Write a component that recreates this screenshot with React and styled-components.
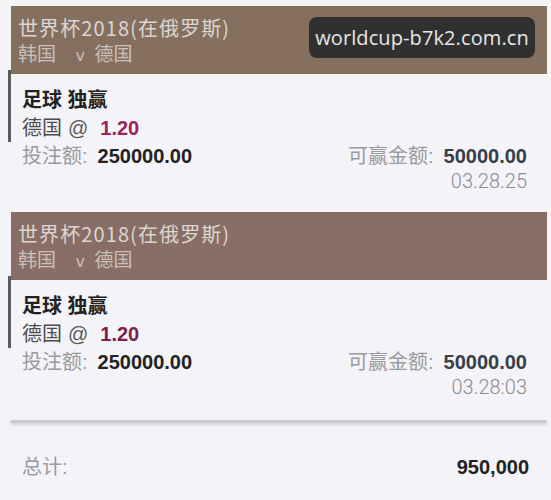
import React from "react";
import styled, { createGlobalStyle } from "styled-components";

const GlobalStyle = createGlobalStyle`
  html, body {
    margin: 0;
    padding: 0;
    background: #f4f3f8;
  }
  body {
    font-family: "Liberation Sans", "Noto Sans CJK SC", sans-serif;
  }
`;

const Page = styled.div`
  position: relative;
  width: 551px;
  min-height: 500px;
  box-sizing: border-box;
  padding: 6px 4px 0 8px;
  background: #f4f3f8;
  overflow: hidden;
`;

const Card = styled.section`
  display: flex;
  flex-direction: column;
  & + & {
    margin-top: 12px;
  }
`;

const Header = styled.header`
  margin-left: 3px;
  height: 68px;
  box-sizing: border-box;
  padding: 9px 7px;
  background: ${(p) => p.$tone};
  color: #ddd5d1;
  font-family: "Noto Sans CJK SC", "Liberation Sans", sans-serif;
  font-size: 20px;
  line-height: 25px;
  display: flex;
  flex-direction: column;
`;

const Title = styled.div`
  height: 25px;
  letter-spacing: 1.1px;
`;

const Match = styled.div`
  height: 25px;
  color: #cbc0bb;
  font-size: 19px;
`;

const Vs = styled.span`
  font-family: "Liberation Sans", sans-serif;
  font-size: 17px;
  margin: 0 10px 0 20px;
`;

const Selection = styled.div`
  margin-top: -4px;
  padding: 16px 0 0 11px;
  border-left: 3px solid #5d5a5c;
  display: flex;
  flex-direction: column;
`;

const Line = styled.div`
  height: 28px;
  line-height: 28px;
  font-size: 20px;
  color: #2a2a2a;
  white-space: pre;
`;

const Market = styled(Line)`
  font-weight: bold;
  color: #222;
`;

const Pick = styled(Line)`
  color: #4c4c4c;
`;

const At = styled.span`
  margin: 0 12px 0 6px;
  color: #5a5a5a;
`;

const Odds = styled.span`
  font-weight: bold;
  color: ${(p) => p.$color};
`;

const Amounts = styled.div`
  display: flex;
  justify-content: space-between;
  align-items: center;
  height: 28px;
  padding: 0 20px 0 14px;
  font-size: 20px;
  line-height: 28px;
`;

const Field = styled.div`
  display: flex;
  align-items: baseline;
`;

const Label = styled.span`
  color: #9b9a9e;
  margin-right: 10px;
`;

const Value = styled.span`
  font-weight: bold;
  color: ${(p) => p.$color || "#222"};
`;

const Time = styled.div`
  height: 22px;
  line-height: 22px;
  padding: 0 20px 8px 0;
  text-align: right;
  font-family: "Roboto", "Liberation Sans", sans-serif;
  font-weight: 300;
  font-size: 20px;
  color: #8d8c92;
`;

const Divider = styled.hr`
  margin: 14px 0 0 2px;
  height: 3px;
  border: none;
  border-radius: 2px;
  background: #c9c9ce;
  box-shadow: 0 2px 3px rgba(150, 150, 160, 0.35);
`;

const Total = styled(Amounts)`
  margin-top: 30px;
  padding-right: 18px;
`;

const Stamp = styled.div`
  position: absolute;
  top: 17px;
  right: 16px;
  width: 226px;
  height: 41px;
  box-sizing: border-box;
  border-radius: 8px;
  background: #313030;
  color: #e8e6e6;
  display: flex;
  align-items: center;
  justify-content: center;
  font-family: "Open Sans", "Noto Sans", sans-serif;
  font-size: 20px;
  letter-spacing: 0.1px;
`;

const bets = [
  { tone: "#85705f", odds: "#9c2359", time: "03.28.25" },
  { tone: "#886e66", odds: "#7d1f4a", time: "03.28:03" },
];

function BetCard({ tone, odds, time }) {
  return (
    <Card>
      <Header $tone={tone}>
        <Title>世界杯2018(在俄罗斯)</Title>
        <Match>
          韩国<Vs>v</Vs>德国
        </Match>
      </Header>
      <Selection>
        <Market>足球 独赢</Market>
        <Pick>
          德国<At>@</At>
          <Odds $color={odds}>1.20</Odds>
        </Pick>
      </Selection>
      <Amounts>
        <Field>
          <Label>投注额:</Label>
          <Value>250000.00</Value>
        </Field>
        <Field>
          <Label>可赢金额:</Label>
          <Value $color="#36404a">50000.00</Value>
        </Field>
      </Amounts>
      <Time>{time}</Time>
    </Card>
  );
}

export default function App() {
  return (
    <>
      <GlobalStyle />
      <Page>
        {bets.map((b) => (
          <BetCard key={b.time} {...b} />
        ))}
        <Divider />
        <Total>
          <Label>总计:</Label>
          <Value>950,000</Value>
        </Total>
        <Stamp>worldcup-b7k2.com.cn</Stamp>
      </Page>
    </>
  );
}
